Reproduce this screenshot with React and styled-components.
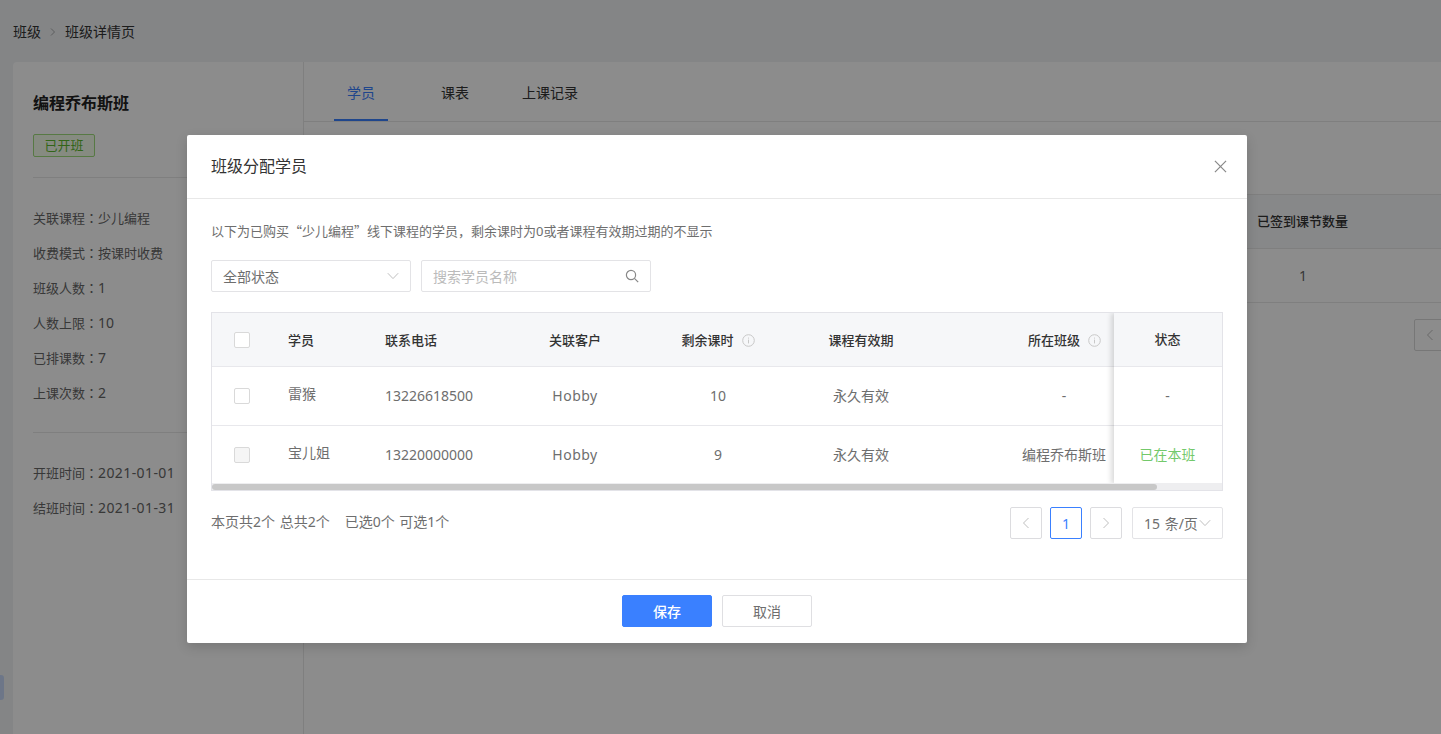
import React from 'react';
import styled, { createGlobalStyle } from 'styled-components';

const Global = createGlobalStyle`
  html, body { margin: 0; padding: 0; height: 100%; overflow: hidden; }
  body { font-family: "Noto Sans", "Noto Sans CJK SC", sans-serif; font-size: 14px; color: #666; }
  #root { height: 100%; }
  * { box-sizing: border-box; }
`;

const Page = styled.div`
  position: relative; width: 1441px; height: 734px; background: #f0f2f5; overflow: hidden;
`;
const Crumbs = styled.nav`
  position: absolute; left: 13px; top: 22px; height: 20px; display: flex; align-items: center;
  font-size: 14px; line-height: 20px; color: #333;
`;
const CrumbSep = styled.svg`
  width: 8px; height: 8px; margin: 0 8px 0 8px; fill: none; stroke: #aaa; stroke-width: 1;
`;
const SideTab = styled.div`
  position: absolute; left: 0; top: 675px; width: 4px; height: 25px; background: #c6d8f8; border-radius: 0 3px 3px 0;
`;
const Card = styled.section`
  position: absolute; left: 13px; top: 62px; right: 0; bottom: 0; background: #fff;
  border-radius: 4px 0 0 0; display: flex;
`;
const Side = styled.aside`
  width: 291px; border-right: 1px solid #e8e8e8; padding: 29px 20px 0; flex: none;
`;
const ClassName = styled.h1`
  margin: 0; font-size: 16px; line-height: 24px; font-weight: 700; color: #222;
`;
const Tag = styled.span`
  display: block; width: 62px; height: 23px; margin-top: 19px; border: 1px solid #9fdc7c; border-radius: 2px;
  background: #f4fdec; color: #5cb82e; font-size: 13px; line-height: 21px; text-align: center;
`;
const Rule = styled.div`
  height: 1px; background: #e8e8e8; margin-top: ${p => p.$top}px;
`;
const InfoList = styled.div`
  margin-top: ${p => p.$top}px; display: flex; flex-direction: column; gap: 15px;
`;
const InfoLine = styled.div`
  height: 20px; line-height: 20px; font-size: 13px; color: #666; white-space: nowrap;
`;
const Colon = styled.span`
  font-family: "Noto Sans CJK TC", sans-serif;
`;
const Num = styled.span`
  font-size: 14px; letter-spacing: ${p => (p.$date ? '.4px' : '0')};
`;
const Main = styled.div`flex: 1; position: relative;`;
const Tabs = styled.div`
  height: 60px; border-bottom: 1px solid #e8e8e8; position: relative;
`;
const Tab = styled.a`
  position: absolute; left: ${p => p.$left}px; top: 21px; font-size: 14px; line-height: 20px;
  color: ${p => (p.$active ? '#3a80ff' : '#333')};
`;
const Ink = styled.i`
  position: absolute; left: 30px; bottom: 0; width: 54px; height: 2px; background: #3a80ff;
`;
const BgTable = styled.div`
  position: absolute; left: 20px; right: 0; top: 132px; border-top: 1px solid #e8e8e8;
`;
const BgRow = styled.div`
  height: ${p => p.$h}px; border-bottom: 1px solid #e8e8e8; background: ${p => p.$bg || '#fff'};
  position: relative; line-height: ${p => p.$h - 1}px;
`;
const BgHeadText = styled.span`
  position: absolute; left: 933px; font-size: 13px; font-weight: 500; color: #333;
`;
const BgValue = styled.span`
  position: absolute; left: 975px; width: 8px; text-align: center; font-size: 14px; color: #666;
`;
const BgPager = styled.div`
  position: absolute; left: 1110px; top: 257px; width: 40px; height: 32px; border: 1px solid #d9d9d9;
  border-radius: 2px 0 0 2px; background: #fff; display: flex; align-items: center; padding-left: 10px;
`;

const Mask = styled.div`
  position: absolute; inset: 0; background: rgba(0,0,0,.45);
`;
const Modal = styled.div`
  position: absolute; left: 187px; top: 135px; width: 1060px; height: 508px; background: #fff; border-radius: 2px;
  box-shadow: 0 4px 12px rgba(0,0,0,.15);
`;
const ModalHead = styled.header`
  height: 64px; border-bottom: 1px solid #e8e8e8; padding: 0 24px; display: flex; align-items: center;
  justify-content: space-between;
`;
const ModalTitle = styled.h2`
  margin: 0; font-size: 16px; line-height: 22px; font-weight: 400; color: #333; position: relative; top: -1px;
`;
const Close = styled.svg`
  width: 13px; height: 13px; fill: none; stroke: #888; stroke-width: 1.3; margin-right: -4px; position: relative; top: 0;
`;
const Desc = styled.p`
  position: absolute; left: 24px; top: 86px; margin: 0; font-size: 13px; line-height: 20px; color: #6e6e6e; white-space: nowrap;
`;
const Cjk = styled.span`
  font-family: "Noto Sans CJK SC", sans-serif;
`;
const Field = styled.div`
  position: absolute; left: ${p => p.$left}px; top: 125px; width: ${p => p.$w}px; height: 32px;
  border: 1px solid #e3e3e6; border-radius: 2px; display: flex; align-items: center; justify-content: space-between;
  padding: 0 11px; font-size: 14px; color: ${p => (p.$ph ? '#bbb' : '#6e6e6e')};
`;
const Chevron = styled.svg`
  width: 12px; height: 12px; fill: none; stroke: #bfbfbf; stroke-width: 1; flex: none;
`;
const Lens = styled.svg`
  width: 14px; height: 14px; fill: none; stroke: #888; stroke-width: 1.2;
`;
const TableWrap = styled.div`
  position: absolute; left: 24px; top: 177px; width: 1012px; height: 179px; border: 1px solid #e3e3e8;
  overflow: hidden;
`;
const Grid = styled.table`
  border-collapse: separate; border-spacing: 0; table-layout: fixed; width: 1010px;
`;
const HeadCell = styled.th`
  height: 54px; padding: 0; background: #f6f7f9; border-bottom: 1px solid #e8e8ec; font-size: 13px; font-weight: 500;
  color: #333; text-align: ${p => p.$align || 'center'}; padding-left: ${p => p.$pl || 0}px;
  white-space: nowrap;
`;
const Cell = styled.td`
  height: ${p => p.$h}px; padding: 0; background: #fff; font-size: 14px; color: #6e6e6e;
  text-align: ${p => p.$align || 'center'}; padding-left: ${p => p.$pl || 0}px; white-space: nowrap;
  ${p => (p.$line ? 'border-bottom: 1px solid #e8e8ec;' : '')}
`;
const CellText = styled.span`
  position: relative; top: ${p => -p.$up}px; letter-spacing: ${p => p.$ls || 0}px;
`;
const Check = styled.span`
  display: block; width: 16px; height: 16px; margin-left: 22px; border: 1px solid #d9d9d9; border-radius: 2px;
  background: ${p => (p.$off ? '#f5f5f5' : '#fff')};
`;
const InfoIcon = styled.svg`
  width: 13px; height: 13px; margin-left: 8px; vertical-align: -2px; fill: none; stroke: #c8c8c8; stroke-width: 1;
`;
const FixedCol = styled.div`
  position: absolute; right: 0; top: 0; width: 108px; height: 171px; padding-right: 1px; background: #fff;
  box-shadow: -3px 0 5px rgba(0,0,0,.14); text-align: center;
`;
const FixedHead = styled.div`
  height: 54px; line-height: 53px; margin-right: -1px; padding-right: 1px; background: #f6f7f9; border-bottom: 1px solid #e8e8ec; font-size: 13px; font-weight: 500; color: #333;
`;
const FixedCell = styled.div`
  height: ${p => p.$h}px; line-height: ${p => p.$h - 1}px; margin-right: -1px; padding-right: 1px; font-size: 14px; color: ${p => p.$color || '#6e6e6e'};
  ${p => (p.$line ? 'border-bottom: 1px solid #e8e8ec;' : '')}
`;
const Track = styled.div`
  position: absolute; left: 0; right: 0; bottom: 0; height: 7px; background: #eeeef0;
`;
const Thumb = styled.div`
  width: 945px; height: 6px; margin-top: 1px; background: #c8c8c8; border-radius: 3px;
`;
const Summary = styled.div`
  position: absolute; left: 24px; top: 377px; font-size: 14px; line-height: 20px; color: #6e6e6e; white-space: nowrap; word-spacing: 1px;
`;
const SummaryGap = styled.span`margin-left: 15px;`;
const Pager = styled.div`
  position: absolute; right: 24px; top: 372px; display: flex; gap: 8px;
`;
const PageBtn = styled.div`
  width: 32px; height: 32px; border: 1px solid ${p => (p.$active ? '#3a80ff' : '#dcdcdf')}; border-radius: 2px;
  color: #3a80ff; font-size: 14px; display: flex; align-items: center; justify-content: center;
`;
const PageSize = styled.div`
  width: 91px; height: 32px; margin-left: 2px; border: 1px solid #e3e3e6; border-radius: 2px; display: flex; align-items: center;
  padding-left: 11px; font-size: 14px; color: #6e6e6e; white-space: nowrap; word-spacing: 1px; gap: 1px;
`;
const Arrow = styled.svg`
  width: 10px; height: 12px; fill: none; stroke: ${p => p.$c || '#bfbfbf'}; stroke-width: 1;
`;
const Footer = styled.footer`
  position: absolute; left: 0; right: 0; bottom: 0; height: 64px; border-top: 1px solid #e8e8e8;
  display: flex; justify-content: center; align-items: center; gap: 10px; padding-bottom: 1px;
`;
const Btn = styled.button`
  width: 90px; height: 32px; padding: 0; border-radius: 2px; font: inherit; font-size: 14px; font-weight: ${p => (p.$primary ? 500 : 400)};
  border: 1px solid ${p => (p.$primary ? '#3a80ff' : '#dfdfe2')}; background: ${p => (p.$primary ? '#3a80ff' : '#fff')};
  color: ${p => (p.$primary ? '#fff' : '#6e6e6e')};
`;

const Info = () => (
  <InfoIcon viewBox="0 0 13 13"><circle cx="6.5" cy="6.5" r="5.8" /><path d="M6.5 5.6v3.8M6.5 3.6v1" /></InfoIcon>
);
const Left = ({ c }) => <Arrow $c={c} viewBox="0 0 10 12"><path d="M7.5 1 2.5 6l5 5" /></Arrow>;
const Right = () => <Arrow viewBox="0 0 10 12"><path d="M2.5 1l5 5-5 5" /></Arrow>;
const Down = () => <Chevron viewBox="0 0 12 12"><path d="M.8 3.2 6 8.6l5.2-5.4" /></Chevron>;
const C = () => <Colon>：</Colon>;

const students = [
  { name: '雷猴', phone: '13226618500', left: 10, cls: '-', line: true, h: 59 },
  { name: '宝儿姐', phone: '13220000000', left: 9, cls: '编程乔布斯班', off: true, h: 58 },
];

export default function App() {
  return (
    <Page>
      <Global />
      <Crumbs>
        班级
        <CrumbSep viewBox="0 0 8 8"><path d="M2 .5 5.5 4 2 7.5" /></CrumbSep>
        班级详情页
      </Crumbs>
      <SideTab />
      <Card>
        <Side>
          <ClassName>编程乔布斯班</ClassName>
          <Tag>已开班</Tag>
          <Rule $top={20} />
          <InfoList $top={30}>
            <InfoLine>关联课程<C />少儿编程</InfoLine>
            <InfoLine>收费模式<C />按课时收费</InfoLine>
            <InfoLine>班级人数<C /><Num>1</Num></InfoLine>
            <InfoLine>人数上限<C /><Num>10</Num></InfoLine>
            <InfoLine>已排课数<C /><Num>7</Num></InfoLine>
            <InfoLine>上课次数<C /><Num>2</Num></InfoLine>
          </InfoList>
          <Rule $top={29} />
          <InfoList $top={30}>
            <InfoLine>开班时间<C /><Num $date>2021-01-01</Num></InfoLine>
            <InfoLine>结班时间<C /><Num $date>2021-01-31</Num></InfoLine>
          </InfoList>
        </Side>
        <Main>
          <Tabs>
            <Tab $active $left={43}>学员</Tab>
            <Ink />
            <Tab $left={137}>课表</Tab>
            <Tab $left={218}>上课记录</Tab>
          </Tabs>
          <BgTable>
            <BgRow $h={54} $bg="#f6f7f9"><BgHeadText>已签到课节数量</BgHeadText></BgRow>
            <BgRow $h={54}><BgValue>1</BgValue></BgRow>
          </BgTable>
          <BgPager><Left c="#bfbfbf" /></BgPager>
        </Main>
      </Card>
      <Mask />
      <Modal>
        <ModalHead>
          <ModalTitle>班级分配学员</ModalTitle>
          <Close viewBox="0 0 14 14"><path d="M1 1l12 12M13 1 1 13" /></Close>
        </ModalHead>
        <Desc>以下为已购买<Cjk>“</Cjk>少儿编程<Cjk>”</Cjk>线下课程的学员，剩余课时为0或者课程有效期过期的不显示</Desc>
        <Field $left={24} $w={200}>全部状态<Down /></Field>
        <Field $left={234} $w={230} $ph>
          搜索学员名称
          <Lens viewBox="0 0 14 14"><circle cx="6" cy="6" r="4.6" /><path d="m9.4 9.4 3.8 3.8" /></Lens>
        </Field>
        <TableWrap>
          <Grid>
            <colgroup>
              <col style={{ width: 61 }} /><col style={{ width: 97 }} /><col style={{ width: 130 }} />
              <col style={{ width: 150 }} /><col style={{ width: 136 }} /><col style={{ width: 150 }} />
              <col style={{ width: 177 }} /><col style={{ width: 109 }} />
            </colgroup>
            <thead>
              <tr>
                <HeadCell><Check /></HeadCell>
                <HeadCell $align="left" $pl={15}>学员</HeadCell>
                <HeadCell $align="left" $pl={15}>联系电话</HeadCell>
                <HeadCell>关联客户</HeadCell>
                <HeadCell>剩余课时<Info /></HeadCell>
                <HeadCell>课程有效期</HeadCell>
                <HeadCell $pl={80}>所在班级<Info /></HeadCell>
                <HeadCell />
              </tr>
            </thead>
            <tbody>
              {students.map(s => (
                <tr key={s.phone}>
                  <Cell $h={s.h} $line={s.line}><Check $off={s.off} /></Cell>
                  <Cell $h={s.h} $line={s.line} $align="left" $pl={15}><CellText $up={3}>{s.name}</CellText></Cell>
                  <Cell $h={s.h} $line={s.line} $align="left" $pl={15}><CellText $up={1}>{s.phone}</CellText></Cell>
                  <Cell $h={s.h} $line={s.line}><CellText $up={1} $ls={0.5}>Hobby</CellText></Cell>
                  <Cell $h={s.h} $line={s.line}><CellText $up={1}>{s.left}</CellText></Cell>
                  <Cell $h={s.h} $line={s.line}><CellText $up={1}>永久有效</CellText></Cell>
                  <Cell $h={s.h} $line={s.line} $pl={79}><CellText $up={1}>{s.cls}</CellText></Cell>
                  <Cell $h={s.h} $line={s.line} />
                </tr>
              ))}
            </tbody>
          </Grid>
          <FixedCol>
            <FixedHead>状态</FixedHead>
            <FixedCell $h={59} $line>-</FixedCell>
            <FixedCell $h={58} $color="#73c96b">已在本班</FixedCell>
          </FixedCol>
          <Track><Thumb /></Track>
        </TableWrap>
        <Summary>本页共2个 总共2个<SummaryGap>已选0个 可选1个</SummaryGap></Summary>
        <Pager>
          <PageBtn><Left /></PageBtn>
          <PageBtn $active>1</PageBtn>
          <PageBtn><Right /></PageBtn>
          <PageSize>15 条/页<Down /></PageSize>
        </Pager>
        <Footer>
          <Btn $primary>保存</Btn>
          <Btn>取消</Btn>
        </Footer>
      </Modal>
    </Page>
  );
}
